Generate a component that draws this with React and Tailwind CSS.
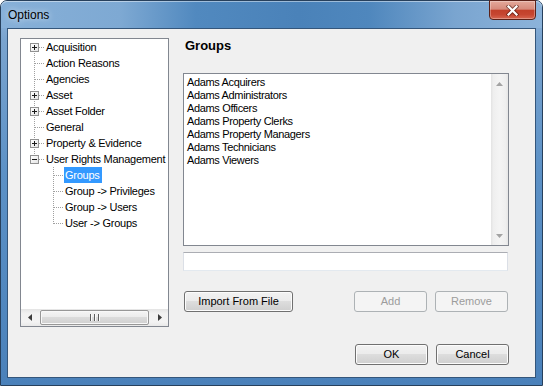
import clsx from 'clsx'

const dotV = 'bg-[repeating-linear-gradient(to_bottom,#a0a0a0_0_1px,transparent_1px_2px)]'
const dotH = 'bg-[repeating-linear-gradient(to_right,#a0a0a0_0_1px,transparent_1px_2px)]'

const tree = [
  { label: 'Acquisition', exp: '+', v: 'bottom' },
  { label: 'Action Reasons', v: 'full' },
  { label: 'Agencies', v: 'full' },
  { label: 'Asset', exp: '+', v: 'full' },
  { label: 'Asset Folder', exp: '+', v: 'full' },
  { label: 'General', v: 'full' },
  { label: 'Property & Evidence', exp: '+', v: 'full' },
  { label: 'User Rights Management', exp: '-', v: 'top' },
  { label: 'Groups', child: true, v: 'full', selected: true },
  { label: 'Group -> Privileges', child: true, v: 'full' },
  { label: 'Group -> Users', child: true, v: 'full' },
  { label: 'User -> Groups', child: true, v: 'top' },
]

const groups = [
  'Adams Acquirers',
  'Adams Administrators',
  'Adams Officers',
  'Adams Property Clerks',
  'Adams Property Managers',
  'Adams Technicians',
  'Adams Viewers',
]

function Expander({ sign }) {
  return (
    <div className="absolute left-[5px] top-[4px] h-[9px] w-[9px] border border-[#919191] bg-[linear-gradient(to_bottom_right,#ffffff,#e4e4e4)]">
      <div className="absolute left-[1px] top-[3px] h-px w-[5px] bg-[#1a1a1a]" />
      {sign === '+' && <div className="absolute left-[3px] top-[1px] h-[5px] w-px bg-[#1a1a1a]" />}
    </div>
  )
}

function Connector({ v, exp }) {
  return (
    <div className="relative h-[16px] w-[20px] shrink-0">
      <div
        className={clsx(
          'absolute left-[9px] w-px',
          dotV,
          v === 'full' && 'top-0 h-[16px]',
          v === 'top' && 'top-0 h-[9px]',
          v === 'bottom' && 'top-[8px] h-[8px]'
        )}
      />
      <div className={clsx('absolute left-[10px] top-[8px] h-px w-[10px]', dotH)} />
      {exp && <Expander sign={exp} />}
    </div>
  )
}

function HScroll() {
  return (
    <div className="flex h-[17px] shrink-0 bg-[linear-gradient(to_bottom,#e4e4e4,#f1f1f1_25%,#f3f3f3_75%,#e9e9e9)]">
      <div className="flex w-[17px] items-center justify-center">
        <svg width="4" height="7" viewBox="0 0 4 7">
          <path d="M4 0 L0 3.5 L4 7Z" fill="#3c3c3c" />
        </svg>
      </div>
      <div className="mx-[2px] my-[1px] flex flex-1 items-center justify-center rounded-[2px] border border-[#979797] bg-[linear-gradient(to_bottom,#f5f5f5,#ebebeb_50%,#dbdbdb_50%,#d0d0d0)] shadow-[inset_0_0_0_1px_#f8f8f8]">
        <div className="flex gap-[1px]">
          <div className="h-[7px] w-px bg-[#5f5f5f] shadow-[1px_0_0_#fafafa]" />
          <div className="h-[7px] w-px" />
          <div className="h-[7px] w-px bg-[#5f5f5f] shadow-[1px_0_0_#fafafa]" />
          <div className="h-[7px] w-px" />
          <div className="h-[7px] w-px bg-[#5f5f5f] shadow-[1px_0_0_#fafafa]" />
        </div>
      </div>
      <div className="flex w-[17px] items-center justify-center">
        <svg width="4" height="7" viewBox="0 0 4 7">
          <path d="M0 0 L4 3.5 L0 7Z" fill="#3c3c3c" />
        </svg>
      </div>
    </div>
  )
}

function Tree() {
  return (
    <div className="flex h-[289px] w-[149px] shrink-0 flex-col border border-[#828790] bg-white">
      <div className="flex-1 overflow-hidden text-[11px] tracking-[-0.25px] text-black">
        {tree.map((row) => (
          <div key={row.label} className={clsx('flex h-[16px]', row.child ? 'pl-[23px]' : 'pl-[4px]')}>
            <Connector v={row.v} exp={row.exp} />
            <span
              className={clsx(
                'flex h-full items-center whitespace-nowrap pl-[1px] pr-[2px]',
                row.selected && 'bg-[#3399ff] text-white'
              )}
            >
              {row.label}
            </span>
          </div>
        ))}
      </div>
      <HScroll />
    </div>
  )
}

function Btn({ children, className, disabled }) {
  return (
    <button
      type="button"
      className={clsx(
        'flex h-[21px] shrink-0 items-center justify-center rounded-[3px] border text-[11px]',
        className,
        disabled
          ? 'border-[#adb2b5] bg-[#f4f4f4] text-[#9c9c9c]'
          : 'border-[#707070] bg-[linear-gradient(to_bottom,#f2f2f2_0%,#ebebeb_50%,#dddddd_50%,#cfcfcf_100%)] text-black shadow-[inset_0_0_0_1px_#fcfcfc]'
      )}
    >
      {children}
    </button>
  )
}

export default function App() {
  return (
    <div className="flex h-[386px] w-[543px] flex-col rounded-t-[7px] border border-[#27405c] bg-[linear-gradient(to_bottom,#94b9de_0%,#7aa4cf_10%,#5c91c6_45%,#4a81ba_100%)] font-['Liberation_Sans',Arial,sans-serif]">
      <div className="flex h-[27px] shrink-0 items-start justify-between rounded-t-[6px] bg-[linear-gradient(to_right,#87b0d8_0%,#7ea9d3_22%,#5189bf_36%,#4a82b9_55%,#4f87bd_68%,#7aa5d0_84%,#8cb3da_100%)] shadow-[inset_0_1px_0_rgba(255,255,255,0.45)]">
        <span className="pl-[7px] pt-[7px] text-[12px] leading-[15px] text-black [text-shadow:0_0_6px_rgba(255,255,255,0.85)]">
          Options
        </span>
        <div className="mr-[6px] -mt-px flex h-[20px] w-[47px] items-center justify-center rounded-b-[4px] border border-[#5b2118] bg-[linear-gradient(to_bottom,#e4a99b_0%,#d68a7b_45%,#c2402a_52%,#c64631_75%,#d76650_100%)] shadow-[inset_0_0_0_1px_rgba(255,255,255,0.3)]">
          <svg width="13" height="11" viewBox="0 0 13 11" className="mt-px">
            <path d="M2.5 1.5 L10.5 9.5 M10.5 1.5 L2.5 9.5" stroke="#3b0d06" strokeWidth="4" strokeLinecap="square" opacity="0.55" />
            <path d="M2.5 1.5 L10.5 9.5 M10.5 1.5 L2.5 9.5" stroke="#ffffff" strokeWidth="2.2" strokeLinecap="square" />
          </svg>
        </div>
      </div>

      <div className="mx-[6px] flex h-[350px] shrink-0 flex-col border border-[#34567b] bg-[#f0f0f0]">
        <div className="flex pl-[12px] pt-[9px]">
          <Tree />
          <div className="ml-[14px] flex w-[326px] flex-col">
            <div className="pl-[2px] text-[13px] font-bold leading-[15px] text-black">Groups</div>
            <div className="mt-[20px] flex h-[173px] border border-[#828790] bg-white">
              <div className="flex-1 pl-[3px] pt-[2px] text-[11px] leading-[13px] tracking-[-0.35px] text-black">
                {groups.map((g) => (
                  <div key={g} className="whitespace-nowrap">{g}</div>
                ))}
              </div>
              <div className="flex w-[17px] flex-col justify-between bg-[linear-gradient(to_right,#e3e3e3,#efefef_15%,#f4f4f4_50%,#efefef_85%,#e6e6e6)]">
                <div className="flex h-[17px] items-center justify-center pt-[2px]">
                  <svg width="7" height="4" viewBox="0 0 7 4">
                    <path d="M3.5 0 L7 4 L0 4Z" fill="#a3a3a3" />
                  </svg>
                </div>
                <div className="flex h-[17px] items-center justify-center pb-[1px]">
                  <svg width="7" height="4" viewBox="0 0 7 4">
                    <path d="M0 0 L7 0 L3.5 4Z" fill="#a3a3a3" />
                  </svg>
                </div>
              </div>
            </div>
            <div className="mt-[6px] h-[19px] w-[325px] border border-[#dbdfe6] border-t-[#abadb3] border-b-[#e3e9ef] bg-white" />
            <div className="mt-[20px] flex">
              <Btn className="ml-[1px] w-[109px]">Import From File</Btn>
              <div className="flex-1" />
              <Btn className="w-[73px]" disabled>Add</Btn>
              <Btn className="ml-[8px] mr-[1px] w-[73px]" disabled>Remove</Btn>
            </div>
          </div>
        </div>
        <div className="mt-[17px] flex justify-end gap-[8px] pr-[26px]">
          <Btn className="w-[73px]">OK</Btn>
          <Btn className="w-[73px]">Cancel</Btn>
        </div>
      </div>
    </div>
  )
}
